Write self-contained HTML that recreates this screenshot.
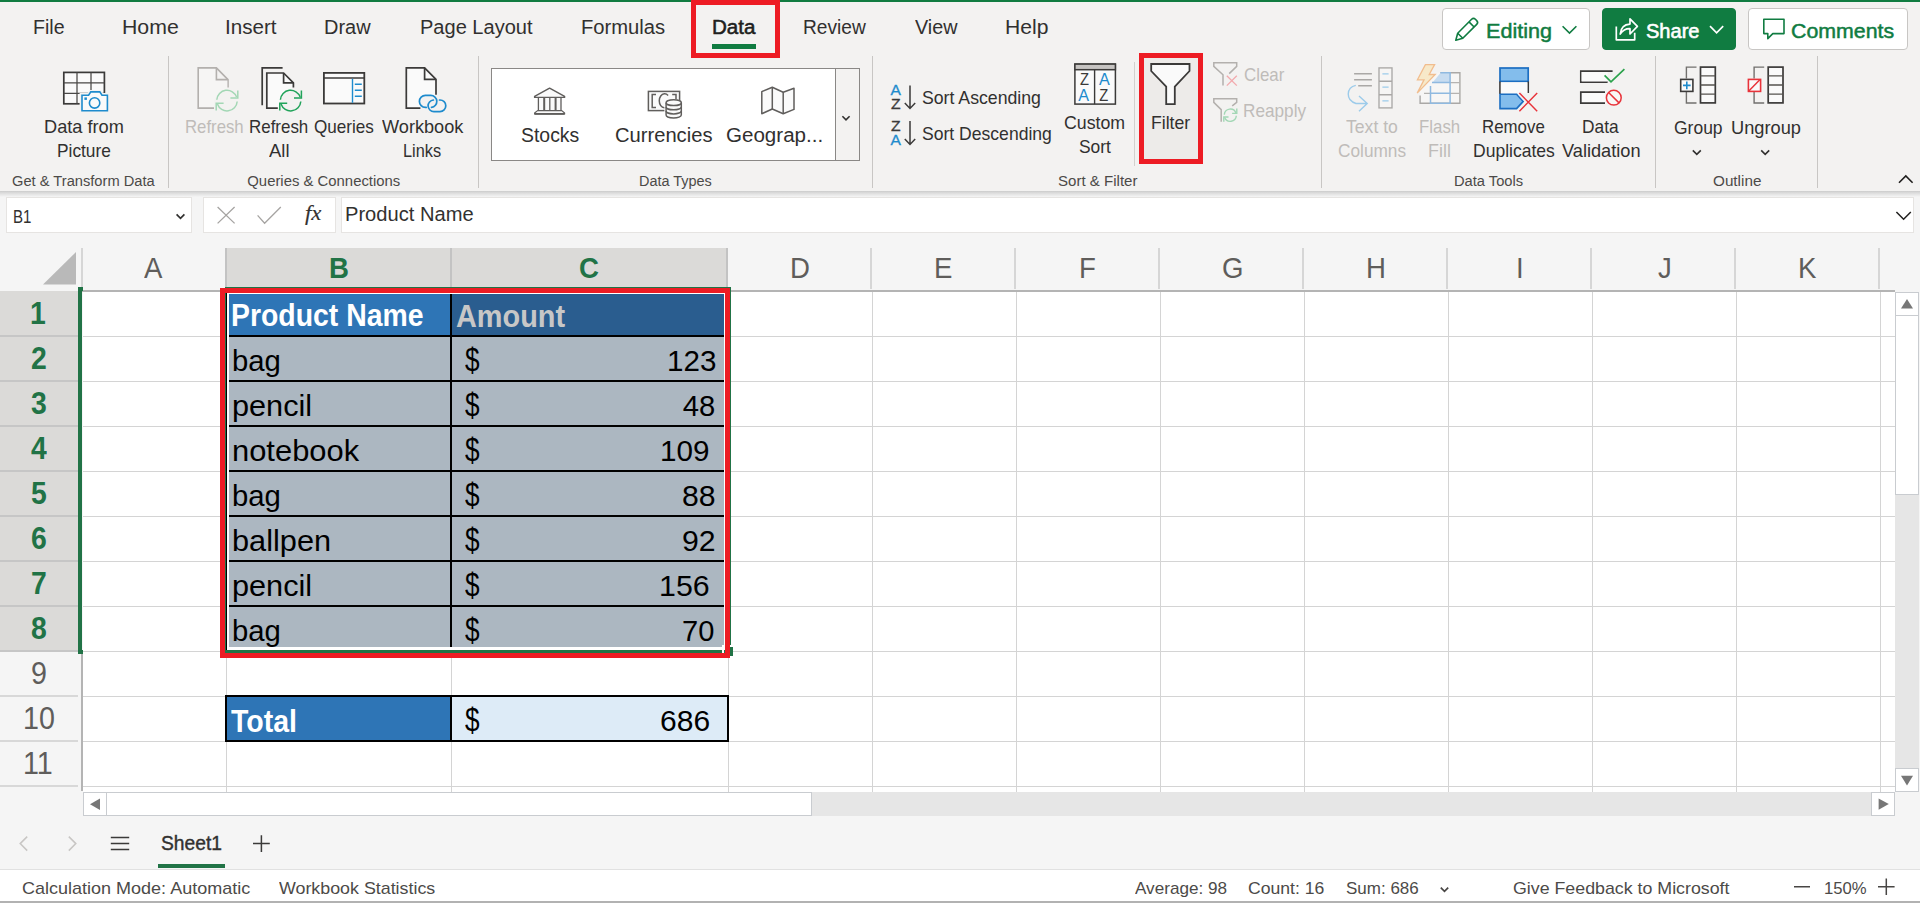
<!DOCTYPE html>
<html lang="en"><head><meta charset="utf-8"><title>Book - Excel</title>
<style>
html,body{margin:0;padding:0;background:#f5f5f5}
#app{position:relative;width:1920px;height:903px;overflow:hidden;background:#f5f5f5;font-family:"Liberation Sans",sans-serif}
#app div,#app i,#app svg.icons{position:absolute;display:block;box-sizing:border-box}
.t{position:absolute;white-space:nowrap;line-height:1;transform-origin:0 0;color:#252423}
.sf{font-family:"Liberation Serif",serif}
.ribbon{left:0;top:0;width:1920px;height:191px;background:#f3f2f1}
.rshadow{left:0;top:191px;width:1920px;height:6px;background:linear-gradient(#cbcbcb,#d7d7d7 22%,#e3e3e3 50%,#eeeeee 80%,#f5f5f5)}
.topline{left:0;top:0;width:1920px;height:2px;background:#107c41}
.sep{width:1px;top:56px;height:132px;background:#c8c6c4}
.sep.s{top:62px;height:104px;background:#d2d0ce}
.tabsel{left:712px;top:44px;width:44px;height:5px;background:#107c41}
.redbox{border:5px solid #ed1c24}
.btn{top:8px;height:42px;border-radius:4px;background:#fff;border:1px solid #c8c6c4}
.btn.share{background:#107c41;border-color:#107c41}
.gallery{left:491px;top:68px;width:369px;height:93px;background:#fff;border:1px solid #8a8886}
.gallery .more{left:343px;top:0;width:24px;height:91px;background:#f3f2f1;border-left:1px solid #8a8886}
.filterbg{left:1144px;top:58px;width:54px;height:101px;background:#edebe9}
.fbox{top:197px;height:36px;background:#fff;border:1px solid #e6e4e2}
.colsel{left:226px;top:248px;width:501px;height:42px;background:#dbdad8}
.hd{top:248px;width:2px;height:41px;background:#d6d6d6}
.hd.sel{background:#c3c3c3}
.hline{left:78px;top:290px;width:1817px;height:2px;background:#b4b4b4}
.rowsel{left:0;top:291px;width:78px;height:361px;background:#dbdad8}
.rd{left:0;width:78px;height:2px;background:#c6c6c6}
.rd.u{background:#d8d8d8}
.rowgreen{left:78px;top:287px;width:4px;height:367px;background:#217346}
.rgfoot{left:82px;width:1px;height:4px;background:#217346}
.rowedge{left:81px;top:654px;width:2px;height:137px;background:#b4b4b4}
.sheet{left:83px;top:292px;width:1812px;height:500px;background:#fff;overflow:hidden}
.gv{top:0;width:1px;height:500px;background:#d4d4d4;margin-left:-83px}
.gh{left:0;width:1812px;height:1px;background:#d4d4d4;margin-top:-292px}
.cell{background:#acb7c1}
.blk{background:#000}
.vsb{left:1895px;top:292px;width:24px;height:500px;background:#e6e6e6}
.sbtn{background:#fff;border:1px solid #c9ccd0}
.hsb{left:83px;top:792px;width:1812px;height:24px;background:#e6e6e6}
.tabline{left:158px;top:864px;width:67px;height:4px;background:#217346}
.status{left:0;top:869px;width:1920px;height:32px;background:#fff;border-top:1px solid #e1e1e1}
.bottomline{left:0;top:901px;width:1920px;height:2px;background:#b2b2b2}
svg.icons{left:0;top:0;pointer-events:none}

</style></head>
<body>
<div id="app">
<div class="ribbon"></div>
<div class="rshadow"></div>
<div class="topline"></div>
<div class="tabsel"></div>
<div class="redbox" style="left:691px;top:0;width:89px;height:58px"></div>
<div class="btn edit" style="left:1442px;width:148px"></div>
<div class="btn share" style="left:1602px;width:134px"></div>
<div class="btn cmt" style="left:1748px;width:160px"></div>
<div class="sep" style="left:168px"></div>
<div class="sep" style="left:478px"></div>
<div class="sep" style="left:872px"></div>
<div class="sep s" style="left:1134px"></div>
<div class="sep" style="left:1321px"></div>
<div class="sep" style="left:1655px"></div>
<div class="sep" style="left:1817px"></div>
<div class="gallery"><div class="more"></div></div>
<div class="filterbg"></div>
<div class="redbox" style="left:1139px;top:53px;width:64px;height:111px"></div>

<div class="fbox" style="left:6px;width:186px"></div>
<div class="fbox" style="left:203px;width:133px"></div>
<div class="fbox" style="left:341px;width:1573px"></div>

<div class="colsel"></div>
<i class="hd" style="left:81px"></i><i class="hd sel" style="left:225px"></i><i class="hd sel" style="left:450px"></i><i class="hd sel" style="left:726px"></i><i class="hd" style="left:870px"></i><i class="hd" style="left:1014px"></i><i class="hd" style="left:1158px"></i><i class="hd" style="left:1302px"></i><i class="hd" style="left:1446px"></i><i class="hd" style="left:1590px"></i><i class="hd" style="left:1734px"></i><i class="hd" style="left:1878px"></i>
<div class="rowsel"></div>
<i class="rd" style="top:335px"></i><i class="rd" style="top:380px"></i><i class="rd" style="top:425px"></i><i class="rd" style="top:470px"></i><i class="rd" style="top:515px"></i><i class="rd" style="top:560px"></i><i class="rd" style="top:605px"></i><i class="rd" style="top:650px"></i><i class="rd u" style="top:695px"></i><i class="rd u" style="top:740px"></i><i class="rd u" style="top:785px"></i>
<div class="hline"></div>
<div class="rowedge"></div>
<div class="sheet">
<i class="gv" style="left:226px"></i><i class="gv" style="left:451px"></i><i class="gv" style="left:728px"></i><i class="gv" style="left:872px"></i><i class="gv" style="left:1016px"></i><i class="gv" style="left:1160px"></i><i class="gv" style="left:1304px"></i><i class="gv" style="left:1448px"></i><i class="gv" style="left:1592px"></i><i class="gv" style="left:1736px"></i><i class="gv" style="left:1880px"></i><i class="gh" style="top:336px"></i><i class="gh" style="top:381px"></i><i class="gh" style="top:426px"></i><i class="gh" style="top:471px"></i><i class="gh" style="top:516px"></i><i class="gh" style="top:561px"></i><i class="gh" style="top:606px"></i><i class="gh" style="top:651px"></i><i class="gh" style="top:696px"></i><i class="gh" style="top:741px"></i><i class="gh" style="top:786px"></i>
</div>
<div class="rowgreen"></div>
<div class="rgfoot" style="top:287px"></div>
<div class="rgfoot" style="top:650px"></div>

<!-- table cells -->
<div class="cell" style="left:229px;top:294px;width:495px;height:353px"></div>
<div class="cell" style="left:229px;top:294px;width:222px;height:42px;background:#2e75b6"></div>
<div class="cell" style="left:452px;top:294px;width:272px;height:42px;background:#2a5d8f"></div>
<div class="blk" style="left:450px;top:294px;width:2px;height:353px"></div>
<div class="blk" style="left:229px;top:335px;width:495px;height:2px"></div>
<div class="blk" style="left:229px;top:380px;width:495px;height:2px"></div>
<div class="blk" style="left:229px;top:425px;width:495px;height:2px"></div>
<div class="blk" style="left:229px;top:470px;width:495px;height:2px"></div>
<div class="blk" style="left:229px;top:515px;width:495px;height:2px"></div>
<div class="blk" style="left:229px;top:560px;width:495px;height:2px"></div>
<div class="blk" style="left:229px;top:605px;width:495px;height:2px"></div>
<!-- selection borders -->
<div style="left:225px;top:287px;width:506px;height:366px;border:2px solid #217346;border-bottom-width:3px;border-right-width:1px"></div>
<div style="left:226px;top:292px;width:1px;height:358px;background:#000"></div>
<div style="left:227px;top:292px;width:2px;height:358px;background:#fff"></div>
<div style="left:227px;top:292px;width:498px;height:2px;background:#fff"></div>
<div style="left:724px;top:292px;width:2px;height:358px;background:#fff"></div>
<div style="left:227px;top:647px;width:498px;height:3px;background:#fff"></div>
<div class="redbox" style="left:220px;top:288px;width:510px;height:370px"></div>
<div style="left:730px;top:645px;width:1px;height:2px;background:#fff"></div>
<div style="left:722px;top:645px;width:2px;height:8px;background:#fff"></div>
<div style="left:730px;top:647px;width:3px;height:9px;background:#217346"></div>

<!-- total row -->
<div class="blk" style="left:225px;top:695px;width:504px;height:47px"></div>
<div style="left:227px;top:697px;width:223px;height:43px;background:#2e75b6"></div>
<div style="left:452px;top:697px;width:275px;height:43px;background:#ddebf7"></div>

<!-- scrollbars -->
<div class="vsb">
  <div class="sbtn" style="left:0;top:0;width:24px;height:24px"></div>
  <div class="sbtn" style="left:0;top:23px;width:24px;height:180px"></div>
  <div class="sbtn" style="left:0;top:476px;width:24px;height:24px"></div>
</div>
<div class="hsb">
  <div class="sbtn" style="left:0;top:0;width:24px;height:24px"></div>
  <div class="sbtn" style="left:23px;top:0;width:706px;height:24px"></div>
  <div class="sbtn" style="left:1788px;top:0;width:24px;height:24px"></div>
</div>
<div class="tabline"></div>
<div class="status"></div>
<div class="bottomline"></div>

<svg class="icons" width="1920" height="903" viewBox="0 0 1920 903" fill="none">
<g class="ic-datapic">
<rect x="63.8" y="72.4" width="40.6" height="31.4" fill="#fafafa" stroke="#3b3a39" stroke-width="1.7"/>
<path d="M77 72.4v31.4M91 72.4v31.4M63.8 82.9h40.6M63.8 93.3h40.6" stroke="#4a4847" stroke-width="1.25"/>
<path d="M79.6 113V93h8l2-3h11.4l2 3h6.6v20z" fill="#f3f2f1"/>
<path d="M82 95.3h6.6l2.2-3.4h9l2.2 3.4h5.4v15.5H82z" fill="#fafafa" stroke="#1e8bcd" stroke-width="1.6"/>
<circle cx="94.6" cy="102.9" r="5.2" stroke="#1e8bcd" stroke-width="1.6"/>
<rect x="84.4" y="97.4" width="2.5" height="2.5" fill="#1e8bcd"/>
</g>
<g class="ic-refresh">
<path d="M228 87.5V79.6L216.4 67.9H198.2V108.1H214" fill="none" stroke="#b3b0ad" stroke-width="1.6"/>
<path d="M199 69h17.4v11H227.3v8l-8 4-5 8v7H199z" fill="#f6f5f4"/>
<path d="M216.4 67.9V79.6H228" fill="none" stroke="#b3b0ad" stroke-width="1.6"/>
<g stroke="#a3d7b5" stroke-width="1.5" fill="none">
<path d="M216.8 99.69999999999999A10.2 10.2 0 0 1 236.6 97.1"/>
<path d="M230.4 97.89999999999999H237.8V90.6"/>
<path d="M237.2 101.5A10.2 10.2 0 0 1 217.4 104.1"/>
<path d="M223.6 103.3H216.2V110.6"/>
</g>
</g>
<g class="ic-refreshall">
<path d="M282.6 67.9H262.2V105.2" stroke="#3b3a39" stroke-width="1.7"/>
<path d="M267 73.3h16.6l9.6 9.7v5l-7 3-6 9v7.7H267z" fill="#fafafa"/>
<path d="M293.4 87.5V82.9L283.6 73H266.8V108.1H277.8" stroke="#3b3a39" stroke-width="1.7"/>
<path d="M283.6 73V82.9H293.4" stroke="#3b3a39" stroke-width="1.7"/>
<g stroke="#21a35a" stroke-width="1.5" fill="none">
<path d="M280.40000000000003 99.69999999999999A10.2 10.2 0 0 1 300.20000000000005 97.1"/>
<path d="M294.0 97.89999999999999H301.40000000000003V90.6"/>
<path d="M300.8 101.5A10.2 10.2 0 0 1 281.0 104.1"/>
<path d="M287.20000000000005 103.3H279.8V110.6"/>
</g>
</g>
<g class="ic-queries">
<rect x="323.9" y="72.9" width="40.4" height="30.6" fill="#fafafa" stroke="#3b3a39" stroke-width="1.8"/>
<path d="M323.9 78h40.4" stroke="#3b3a39" stroke-width="1.7"/>
<path d="M352.5 78.8v24" stroke="#1e8bcd" stroke-width="1.4"/>
<path d="M354.8 84.2h7M354.8 90.2h7M354.8 96.2h7" stroke="#1e8bcd" stroke-width="1.6"/>
</g>
<g class="ic-wblinks">
<path d="M406.3 67.8h18.3l11.4 11.6v15.4l-12 1-4 6v6.4H406.3z" fill="#fafafa"/>
<path d="M436 94.8V79.4L424.6 67.8H406.3V108.2H420.4" stroke="#3b3a39" stroke-width="1.7"/>
<path d="M424.6 67.8V79.4H436" stroke="#3b3a39" stroke-width="1.7"/>
<g stroke="#1e8bcd" stroke-width="1.7" fill="none" stroke-linecap="round">
<path d="M426.2 107.4H425.4A6 6 0 0 1 425.4 95.4H430.8A6 6 0 0 1 431.5 107.36"/>
<path d="M433.4 100.02A5.8 5.8 0 0 0 433.9 111.6H440A5.8 5.8 0 0 0 440 100H439.5"/>
</g></g>
<g class="ic-stocks" stroke="#605e5c" stroke-width="1.4">
<path d="M534.6 96.4L549.6 88.1L564.6 96.4V97.4H534.6z" fill="#fafafa" stroke-linejoin="round"/>
<rect x="538.3" y="98.2" width="22.8" height="11.8" fill="#fafafa" stroke="none"/>
<path d="M538.4 98v12.4M549.8 98v12.4M561 98v12.4" stroke-width="1.3"/>
<path d="M544.2 98v12.4M555.6 98v12.4" stroke-width="2"/>
<path d="M537.6 110.6h24.2L564.6 113v1H534.6v-1z" fill="#fafafa" stroke-width="1.2" stroke-linejoin="round"/>
<path d="M534.6 113.9h30" stroke-width="1.8"/>
</g>
<g class="ic-curr" stroke="#605e5c" stroke-width="1.5">
<rect x="648.4" y="91.4" width="31.2" height="19.2" fill="#fafafa"/>
<path d="M656 94.4h-3.8v13h3.8M672.2 94.4h3.8v5" />
<path d="M668.1 95.4A5.4 7 0 1 0 668.1 106.2"/>
<path d="M664.4 116.5v-14a8.6 3.4 0 0 1 17.6 0v13a8.6 3.4 0 0 1-17.6 0z" fill="#fff" stroke="none"/>
<path d="M666.1 102.7v12.4a7.6 2.9 0 0 0 15.2 0v-12.4" fill="#fafafa"/>
<ellipse cx="673.7" cy="102.7" rx="7.6" ry="2.9" fill="#fafafa"/>
<path d="M666.1 106.9a7.6 2.9 0 0 0 15.2 0M666.1 111a7.6 2.9 0 0 0 15.2 0"/>
</g>
<g class="ic-geo" stroke="#605e5c" stroke-width="1.5" stroke-linejoin="round">
<path d="M761.8 91.6L772.3 87.2L783.2 92.3L794 88.2V109.4L783.2 113.7L772.3 109L761.8 113.7z" fill="#fafafa"/>
<path d="M772.3 87.2V109M783.2 92.3V113.7"/>
</g>
<path d="M842.4 116.2l3.6 3.6l3.6-3.6" stroke="#323130" stroke-width="1.6"/>
<g class="ic-sortasc">
<text x="895.7" y="95.4" font-size="14.3" text-anchor="middle" fill="#1e8bcd" stroke="#1e8bcd" stroke-width=".3" textLength="10.4" lengthAdjust="spacingAndGlyphs">A</text>
<text x="895.7" y="108.7" font-size="14.3" text-anchor="middle" fill="#3b3a39" stroke="#3b3a39" stroke-width=".3" textLength="9.6" lengthAdjust="spacingAndGlyphs">Z</text>
<path d="M910 85.6V108M904.8 103l5.2 5.4l5.2-5.4" stroke="#3b3a39" stroke-width="1.5"/>
</g>
<g class="ic-sortdesc">
<text x="895.7" y="131" font-size="14.3" text-anchor="middle" fill="#3b3a39" stroke="#3b3a39" stroke-width=".3" textLength="9.6" lengthAdjust="spacingAndGlyphs">Z</text>
<text x="895.7" y="144.5" font-size="14.3" text-anchor="middle" fill="#1e8bcd" stroke="#1e8bcd" stroke-width=".3" textLength="10.4" lengthAdjust="spacingAndGlyphs">A</text>
<path d="M910 121V144M904.8 139l5.2 5.4l5.2-5.4" stroke="#3b3a39" stroke-width="1.5"/>
</g>
<g class="ic-customsort">
<rect x="1074.9" y="64.1" width="40.5" height="40" fill="#fafafa" stroke="#3b3a39" stroke-width="1.5"/>
<rect x="1074.9" y="64.1" width="40.5" height="5.6" fill="#c6c4c2" stroke="#3b3a39" stroke-width="1.5"/>
<path d="M1094.6 69.7V104.1" stroke="#3b3a39" stroke-width="1.4"/>
<text x="1084.4" y="85.3" font-size="17.2" text-anchor="middle" fill="#3b3a39" textLength="9" lengthAdjust="spacingAndGlyphs">Z</text>
<text x="1083.6" y="100.6" font-size="17.2" text-anchor="middle" fill="#1e8bcd" textLength="10.8" lengthAdjust="spacingAndGlyphs">A</text>
<text x="1104.5" y="85.3" font-size="17.2" text-anchor="middle" fill="#1e8bcd" textLength="10.8" lengthAdjust="spacingAndGlyphs">A</text>
<text x="1103.8" y="100.6" font-size="17.2" text-anchor="middle" fill="#3b3a39" textLength="9" lengthAdjust="spacingAndGlyphs">Z</text>
</g>
<g class="ic-filter">
<path d="M1151.2 64H1189.5V71L1174.8 86.6V104.1H1166.2V86.6L1151.2 71z" fill="#fafafa" stroke="#3b3a39" stroke-width="1.8" stroke-linejoin="miter"/>
</g>
<g class="ic-clear">
<path d="M1229.2 73.6L1236.7 66.4V62.8H1213.8V66.4L1223 74.8V85.6" stroke="#b3b0ad" stroke-width="1.5" fill="none"/>
<path d="M1226.8 75.8l10 9.8M1236.8 75.8l-10 9.8" stroke="#f2a9ad" stroke-width="1.3"/></g>
<g class="ic-reapply">
<path d="M1232.2 105.8L1236.7 102.4V98.8H1213.8V102.4L1221.2 109.6V121.8" stroke="#b3b0ad" stroke-width="1.5" fill="none"/>
<g stroke="#a3d7b5" stroke-width="1.4" fill="none">
<path d="M1224.3 114.60000000000001A6 6 0 0 1 1235.8999999999999 113.0"/>
<path d="M1232.1 113.4H1236.8V108.60000000000001"/>
<path d="M1236.3 115.8A6 6 0 0 1 1224.7 117.4"/>
<path d="M1228.5 117.0H1223.8V121.8"/>
</g></g>
<g class="ic-t2c">
<path d="M1354.1 73.8h17.8M1354.1 79.8h17.8M1358.2 85.8h13.7" stroke="#aaa8a6" stroke-width="1.4"/>
<rect x="1379" y="67.9" width="13" height="40" fill="#f6f5f4" stroke="#aaa8a6" stroke-width="1.35"/>
<path d="M1379 81.2h13M1379 94.7h13" stroke="#aaa8a6" stroke-width="1.35"/>
<path d="M1382.4 73.8h6.2M1382.4 87.2h6.2M1382.4 100.9h6.2" stroke="#9ccbea" stroke-width="1.3"/>
<path d="M1355.8 85.4C1346 87.6 1345.4 100.4 1356 103.5H1366.8M1359 96l8.2 7.5l-8.2 7.8" stroke="#9ccbea" stroke-width="1.4"/>
</g>
<g class="ic-flash">
<path d="M1421 72.7H1459.9V103.3H1420.1V72.7z" fill="#f7f6f5"/>
<path d="M1440.4 72.7H1459.9V103.3H1420.1V95.4" fill="none" stroke="#aaa8a6" stroke-width="1.4"/>
<path d="M1450 82.6h9.9M1450 93.3h9.9M1424 93.3h6" stroke="#b5b3b1" stroke-width="1.3"/>
<path d="M1440.6 72.7H1450V82.6H1432.6z" fill="#c7dcf0"/>
<path d="M1440.4 72.7H1450.1V103.3H1430.5V86" fill="none" stroke="#8fb9e0" stroke-width="1.5"/>
<path d="M1432 82.6H1450M1430.5 93.3H1450" stroke="#8fb9e0" stroke-width="1.5"/>
<path d="M1425.4 64.6h9.2l-5.4 9.9h6l-18 18.6l6.8-13.3h-6.6z" fill="#f7e9c9" stroke="#f1bd8e" stroke-width="1.3" stroke-linejoin="miter"/>
</g>
<g class="ic-remdup">
<rect x="1500" y="68" width="28.2" height="13.4" fill="#83bdec" stroke="#1b6ec2" stroke-width="1.7"/>
<path d="M1500 81.4V94M1528.2 81.4V93" stroke="#3b3a39" stroke-width="1.7"/>
<rect x="1500.8" y="82.3" width="26.6" height="11" fill="#fafafa"/>
<path d="M1500 94.2h16.6l6.6 7.2l-6.6 7.2H1500z" fill="#83bdec" stroke="#1b6ec2" stroke-width="1.6"/>
<path d="M1519.4 93l17.8 18.2M1537.2 93l-17.8 18.2" stroke="#f3f2f1" stroke-width="4.4"/>
<path d="M1519.4 93l17.8 18.2M1537.2 93l-17.8 18.2" stroke="#e8333a" stroke-width="1.45"/>
</g>
<g class="ic-dataval">
<path d="M1612.6 71.2H1580.8V82.2H1607.6" fill="none" stroke="#3b3a39" stroke-width="1.7"/>
<path d="M1581.6 72h26v9.4h-26z" fill="#fafafa"/>
<path d="M1604.6 75.4l6.4 6.4l13.4-12.6" stroke="#2ba24c" stroke-width="1.7"/>
<path d="M1605 92.2H1580.8V103.2H1605" fill="#fafafa" stroke="#3b3a39" stroke-width="1.7"/>
<circle cx="1613.8" cy="97.7" r="7.4" fill="#f8f7f6" stroke="#e8333a" stroke-width="1.5"/>
<path d="M1608.6 92.5l10.4 10.4" stroke="#e8333a" stroke-width="1.5"/>
</g>
<g>
<path d="M1696.5 67.1H1686.4V78.5M1686.4 92V103H1696.5" stroke="#72706e" stroke-width="1.4"/>
<rect x="1700.5" y="67.1" width="14.8" height="35.8" fill="#fafafa" stroke="#3b3a39" stroke-width="1.7"/>
<path d="M1700.5 75.9h14.8M1700.5 85h14.8M1700.5 94.1h14.8" stroke="#55534f" stroke-width="1.3"/>
<rect x="1680.7" y="79.4" width="12.2" height="12" fill="#fafafa" stroke="#3b3a39" stroke-width="1.6"/>
<path d="M1686.8 81.6v7.6M1683 85.4h7.6" stroke="#1e8bcd" stroke-width="1.6"/>
</g>
<g>
<path d="M1764.2 67.1H1754.1000000000001V78.5M1754.1000000000001 92V103H1764.2" stroke="#72706e" stroke-width="1.4"/>
<rect x="1768.2" y="67.1" width="14.8" height="35.8" fill="#fafafa" stroke="#3b3a39" stroke-width="1.7"/>
<path d="M1768.2 75.9h14.8M1768.2 85h14.8M1768.2 94.1h14.8" stroke="#55534f" stroke-width="1.3"/>
<rect x="1748.4" y="79.4" width="12.2" height="12" fill="#fafafa" stroke="#e8333a" stroke-width="1.6"/>
<path d="M1748.8 91l11-11.2" stroke="#e8333a" stroke-width="1.5"/>
</g>
<path d="M1692.8 150.4l4 4l4-4M1761.2 150.4l4 4l4-4" stroke="#323130" stroke-width="1.6"/>
<path d="M1899 182.8l6.8-6.8l6.8 6.8" stroke="#201f1e" stroke-width="1.6"/>
<g class="ic-pencil" stroke="#107c41" stroke-width="1.6" stroke-linejoin="round">
<path d="M1455.8 40.2l1.9-7L1471.6 19.3a2.7 2.7 0 0 1 3.8 0l1.3 1.3a2.7 2.7 0 0 1 0 3.8L1462.8 38.3z"/>
<path d="M1469 21.9l5.1 5.1M1457.7 33.2l5.1 5.1"/>
</g>
<path d="M1562.6 26.2l6.9 6.9l6.9-6.9" stroke="#107c41" stroke-width="1.6"/>
<g class="ic-share" stroke="#fff" stroke-width="1.7" stroke-linejoin="round">
<path d="M1616.3 26.4v13.4h18.4v-7"/>
<path d="M1620.2 34c.6-6.4 4.6-9.6 9.8-9.9v-5.3l7.4 7.6l-7.4 7.6v-5.3c-4.2-.2-7.2 1.6-9.8 5.3z"/>
</g>
<path d="M1710 26.2l6.6 6.6l6.6-6.6" stroke="#fff" stroke-width="1.7"/>
<path d="M1763.8 19.2h20.2v14.4h-11.2l-5 5v-5h-4z" stroke="#107c41" stroke-width="1.6" stroke-linejoin="round"/>
<path d="M176.6 214.4l3.9 3.9l3.9-3.9" stroke="#323130" stroke-width="1.7"/>
<path d="M217.6 207l17 16.4M234.6 207l-17 16.4" stroke="#a6a4a2" stroke-width="1.3"/>
<path d="M257.6 215.4l7 7.8l16.2-16.2" stroke="#a6a4a2" stroke-width="1.3"/>
<path d="M1896.4 212l7.2 7.2l7.2-7.2" stroke="#201f1e" stroke-width="1.5"/>
<path d="M76 252v32.6H43z" fill="#b9b9b9"/>
<path d="M1901 308.6h12l-6-9.6z" fill="#777"/>
<path d="M1901 775.8h12l-6 9.6z" fill="#777"/>
<path d="M100 798.4v11.6l-10-5.8z" fill="#777"/>
<path d="M1878.6 798.4v11.4l10.2-5.7z" fill="#777"/>
<path d="M27.2 836.6l-7 7l7 7M68.8 836.6l7 7l-7 7" stroke="#c8c6c4" stroke-width="1.5"/>
<path d="M110.8 837.4h18.4M110.8 843.4h18.4M110.8 849.4h18.4" stroke="#3b3a39" stroke-width="1.5"/>
<path d="M253 843.6h16.8M261.4 835.2v16.8" stroke="#3b3a39" stroke-width="1.5"/>
<path d="M1440.8 887.6l3.7 3.7l3.7-3.7" stroke="#484644" stroke-width="1.7"/>
<path d="M1794 886.8h16M1878 886.8h16.6M1886.3 878.6v16.4" stroke="#484644" stroke-width="1.5"/>
</svg>
<div class="texts">
<span class="t" style="left:33.27px;top:15.8px;font-size:21.05px;transform:scaleX(0.9314);color:#31302f;">File</span>
<span class="t" style="left:121.99px;top:15.8px;font-size:21.05px;transform:scaleX(1.0103);color:#31302f;">Home</span>
<span class="t" style="left:225.32px;top:15.8px;font-size:21.05px;transform:scaleX(0.9789);color:#31302f;">Insert</span>
<span class="t" style="left:324.35px;top:15.8px;font-size:21.05px;transform:scaleX(0.9486);color:#31302f;">Draw</span>
<span class="t" style="left:419.85px;top:15.8px;font-size:21.05px;transform:scaleX(0.9519);color:#31302f;">Page Layout</span>
<span class="t" style="left:581.04px;top:15.8px;font-size:21.05px;transform:scaleX(0.9595);color:#31302f;">Formulas</span>
<span class="t" style="left:802.79px;top:15.8px;font-size:21.05px;transform:scaleX(0.9098);color:#31302f;">Review</span>
<span class="t" style="left:914.7px;top:15.8px;font-size:21.05px;transform:scaleX(0.9405);color:#31302f;">View</span>
<span class="t" style="left:1005.3px;top:15.8px;font-size:21.05px;transform:scaleX(1.0029);color:#31302f;">Help</span>
<span class="t" style="left:711.52px;top:15.8px;font-size:21.05px;transform:scaleX(0.9782);color:#201f1e;-webkit-text-stroke:0.55px currentColor;">Data</span>
<span class="t" style="left:1485.67px;top:19.8px;font-size:21.05px;transform:scaleX(1.0264);color:#107c41;-webkit-text-stroke:0.5px currentColor;">Editing</span>
<span class="t" style="left:1645.7px;top:19.8px;font-size:21.05px;transform:scaleX(0.9521);color:#ffffff;-webkit-text-stroke:0.6px currentColor;">Share</span>
<span class="t" style="left:1791.39px;top:19.8px;font-size:21.05px;transform:scaleX(1.0137);color:#107c41;-webkit-text-stroke:0.5px currentColor;">Comments</span>
<span class="t" style="left:43.98px;top:118.8px;font-size:17.75px;transform:scaleX(1.0244);color:#31302f;">Data from</span>
<span class="t" style="left:57.03px;top:142.8px;font-size:17.75px;transform:scaleX(0.9748);color:#31302f;">Picture</span>
<span class="t" style="left:184.66px;top:118.8px;font-size:17.75px;transform:scaleX(0.9439);color:#bfbcb9;">Refresh</span>
<span class="t" style="left:249.05px;top:118.8px;font-size:17.75px;transform:scaleX(0.9539);color:#31302f;">Refresh</span>
<span class="t" style="left:268.5px;top:142.8px;font-size:17.75px;transform:scaleX(1.0382);color:#31302f;">All</span>
<span class="t" style="left:314.0px;top:118.8px;font-size:17.75px;transform:scaleX(0.9635);color:#31302f;">Queries</span>
<span class="t" style="left:381.5px;top:118.8px;font-size:17.75px;transform:scaleX(1.0225);color:#31302f;">Workbook</span>
<span class="t" style="left:402.83px;top:142.8px;font-size:17.75px;transform:scaleX(0.9183);color:#31302f;">Links</span>
<span class="t" style="left:922.0px;top:90px;font-size:17.75px;transform:scaleX(0.9958);color:#31302f;">Sort Ascending</span>
<span class="t" style="left:922.0px;top:125.8px;font-size:17.75px;transform:scaleX(0.9896);color:#31302f;">Sort Descending</span>
<span class="t" style="left:1064.0px;top:114.5px;font-size:17.75px;color:#31302f;">Custom</span>
<span class="t" style="left:1078.6px;top:138.9px;font-size:17.75px;transform:scaleX(0.9809);color:#31302f;">Sort</span>
<span class="t" style="left:1151.31px;top:114.6px;font-size:17.75px;transform:scaleX(0.994);color:#31302f;">Filter</span>
<span class="t" style="left:1243.6px;top:66.5px;font-size:17.75px;transform:scaleX(0.9505);color:#bfbcb9;">Clear</span>
<span class="t" style="left:1242.63px;top:102.9px;font-size:17.75px;transform:scaleX(0.9681);color:#bfbcb9;">Reapply</span>
<span class="t" style="left:1346.0px;top:118.8px;font-size:17.75px;transform:scaleX(0.9921);color:#bfbcb9;">Text to</span>
<span class="t" style="left:1337.8px;top:142.8px;font-size:17.75px;transform:scaleX(0.972);color:#bfbcb9;">Columns</span>
<span class="t" style="left:1419.05px;top:118.8px;font-size:17.75px;transform:scaleX(0.9487);color:#bfbcb9;">Flash</span>
<span class="t" style="left:1428.39px;top:142.8px;font-size:17.75px;transform:scaleX(1.0082);color:#bfbcb9;">Fill</span>
<span class="t" style="left:1482.05px;top:118.8px;font-size:17.75px;transform:scaleX(0.9506);color:#31302f;">Remove</span>
<span class="t" style="left:1472.76px;top:142.8px;font-size:17.75px;transform:scaleX(0.9872);color:#31302f;">Duplicates</span>
<span class="t" style="left:1582.02px;top:118.8px;font-size:17.75px;transform:scaleX(0.9762);color:#31302f;">Data</span>
<span class="t" style="left:1561.7px;top:142.8px;font-size:17.75px;transform:scaleX(1.0255);color:#31302f;">Validation</span>
<span class="t" style="left:1673.8px;top:119.7px;font-size:17.75px;transform:scaleX(0.9846);color:#31302f;">Group</span>
<span class="t" style="left:1730.97px;top:119.7px;font-size:17.75px;transform:scaleX(1.0265);color:#31302f;">Ungroup</span>
<span class="t" style="left:521.0px;top:123.7px;font-size:21.05px;transform:scaleX(0.922);color:#31302f;">Stocks</span>
<span class="t" style="left:615.04px;top:123.7px;font-size:21.05px;transform:scaleX(0.9577);color:#31302f;">Currencies</span>
<span class="t" style="left:726.02px;top:123.7px;font-size:21.05px;transform:scaleX(0.9772);color:#31302f;">Geograp...</span>
<span class="t" style="left:12.3px;top:173.5px;font-size:14.89px;transform:scaleX(0.9865);color:#4c4a48;">Get &amp; Transform Data</span>
<span class="t" style="left:247.3px;top:173.5px;font-size:14.89px;color:#4c4a48;">Queries &amp; Connections</span>
<span class="t" style="left:639.03px;top:173.5px;font-size:14.89px;transform:scaleX(0.9715);color:#4c4a48;">Data Types</span>
<span class="t" style="left:1057.5px;top:173.5px;font-size:14.89px;transform:scaleX(1.0119);color:#4c4a48;">Sort &amp; Filter</span>
<span class="t" style="left:1454.01px;top:173.5px;font-size:14.89px;transform:scaleX(0.9878);color:#4c4a48;">Data Tools</span>
<span class="t" style="left:1712.5px;top:173.5px;font-size:14.89px;transform:scaleX(1.0265);color:#4c4a48;">Outline</span>
<span class="t" style="left:12.67px;top:207.75px;font-size:18.18px;transform:scaleX(0.8286);color:#323130;">B1</span>
<span class="t" style="left:344.97px;top:204.7px;font-size:19.47px;transform:scaleX(1.0341);color:#323130;">Product Name</span>
<span class="t sf" style="left:304.9px;top:203.2px;font-size:20.75px;font-style:italic;transform:scaleX(1.0974);color:#323130;-webkit-text-stroke:0.15px currentColor;">fx</span>
<span class="t" style="left:144.1px;top:253.5px;font-size:29.06px;transform:scaleX(0.95);color:#5f5d5b;">A</span>
<span class="t" style="left:328.53px;top:253.5px;font-size:29.06px;font-weight:700;transform:scaleX(0.95);color:#217346;">B</span>
<span class="t" style="left:579.05px;top:253.5px;font-size:29.06px;font-weight:700;transform:scaleX(0.95);color:#217346;">C</span>
<span class="t" style="left:789.55px;top:253.5px;font-size:29.06px;transform:scaleX(0.95);color:#5f5d5b;">D</span>
<span class="t" style="left:934.02px;top:253.5px;font-size:29.06px;transform:scaleX(0.95);color:#5f5d5b;">E</span>
<span class="t" style="left:1078.97px;top:253.5px;font-size:29.06px;transform:scaleX(0.95);color:#5f5d5b;">F</span>
<span class="t" style="left:1221.55px;top:253.5px;font-size:29.06px;transform:scaleX(0.95);color:#5f5d5b;">G</span>
<span class="t" style="left:1366.02px;top:253.5px;font-size:29.06px;transform:scaleX(0.95);color:#5f5d5b;">H</span>
<span class="t" style="left:1516.2px;top:253.5px;font-size:29.06px;transform:scaleX(0.95);color:#5f5d5b;">I</span>
<span class="t" style="left:1657.83px;top:253.5px;font-size:29.06px;transform:scaleX(0.95);color:#5f5d5b;">J</span>
<span class="t" style="left:1797.55px;top:253.5px;font-size:29.06px;transform:scaleX(0.95);color:#5f5d5b;">K</span>
<span class="t" style="left:30.43px;top:297.9px;font-size:30.49px;font-weight:700;transform:scaleX(0.93);color:#217346;">1</span>
<span class="t" style="left:30.89px;top:342.9px;font-size:30.49px;font-weight:700;transform:scaleX(0.93);color:#217346;">2</span>
<span class="t" style="left:31.36px;top:387.9px;font-size:30.49px;font-weight:700;transform:scaleX(0.93);color:#217346;">3</span>
<span class="t" style="left:30.89px;top:432.9px;font-size:30.49px;font-weight:700;transform:scaleX(0.93);color:#217346;">4</span>
<span class="t" style="left:30.89px;top:477.9px;font-size:30.49px;font-weight:700;transform:scaleX(0.93);color:#217346;">5</span>
<span class="t" style="left:30.89px;top:522.9px;font-size:30.49px;font-weight:700;transform:scaleX(0.93);color:#217346;">6</span>
<span class="t" style="left:30.89px;top:567.9px;font-size:30.49px;font-weight:700;transform:scaleX(0.93);color:#217346;">7</span>
<span class="t" style="left:30.89px;top:612.9px;font-size:30.49px;font-weight:700;transform:scaleX(0.93);color:#217346;">8</span>
<span class="t" style="left:31.01px;top:657.9px;font-size:30.49px;transform:scaleX(0.94);color:#5f5d5b;">9</span>
<span class="t" style="left:23.07px;top:702.9px;font-size:30.49px;transform:scaleX(0.94);color:#5f5d5b;">10</span>
<span class="t" style="left:23.24px;top:747.9px;font-size:30.49px;transform:scaleX(0.94);color:#5f5d5b;">11</span>
<span class="t" style="left:231.37px;top:300.1px;font-size:31.07px;font-weight:700;transform:scaleX(0.9145);color:#ffffff;">Product Name</span>
<span class="t" style="left:456.1px;top:300.6px;font-size:31.07px;font-weight:700;transform:scaleX(0.9293);color:#c7c7c7;">Amount</span>
<span class="t" style="left:231.9px;top:346.6px;font-size:29.21px;transform:scaleX(1.0025);color:#000;">bag</span>
<span class="t" style="left:465.0px;top:344.2px;font-size:32.71px;transform:scaleX(0.8);color:#000;">$</span>
<span class="t" style="left:667.17px;top:346.6px;font-size:29.21px;transform:scaleX(1.0136);color:#000;">123</span>
<span class="t" style="left:231.85px;top:391.6px;font-size:29.21px;transform:scaleX(1.0499);color:#000;">pencil</span>
<span class="t" style="left:465.0px;top:389.2px;font-size:32.71px;transform:scaleX(0.8);color:#000;">$</span>
<span class="t" style="left:682.8px;top:391.6px;font-size:29.21px;color:#000;">48</span>
<span class="t" style="left:231.84px;top:436.6px;font-size:29.21px;transform:scaleX(1.058);color:#000;">notebook</span>
<span class="t" style="left:465.0px;top:434.2px;font-size:32.71px;transform:scaleX(0.8);color:#000;">$</span>
<span class="t" style="left:659.97px;top:436.6px;font-size:29.21px;transform:scaleX(1.0158);color:#000;">109</span>
<span class="t" style="left:231.9px;top:481.6px;font-size:29.21px;transform:scaleX(1.0025);color:#000;">bag</span>
<span class="t" style="left:465.0px;top:479.2px;font-size:32.71px;transform:scaleX(0.8);color:#000;">$</span>
<span class="t" style="left:681.76px;top:481.6px;font-size:29.21px;transform:scaleX(1.035);color:#000;">88</span>
<span class="t" style="left:231.85px;top:526.6px;font-size:29.21px;transform:scaleX(1.0518);color:#000;">ballpen</span>
<span class="t" style="left:465.0px;top:524.2px;font-size:32.71px;transform:scaleX(0.8);color:#000;">$</span>
<span class="t" style="left:681.76px;top:526.6px;font-size:29.21px;transform:scaleX(1.035);color:#000;">92</span>
<span class="t" style="left:231.85px;top:571.6px;font-size:29.21px;transform:scaleX(1.0499);color:#000;">pencil</span>
<span class="t" style="left:465.0px;top:569.2px;font-size:32.71px;transform:scaleX(0.8);color:#000;">$</span>
<span class="t" style="left:659.02px;top:571.6px;font-size:29.21px;transform:scaleX(1.04);color:#000;">156</span>
<span class="t" style="left:231.9px;top:616.6px;font-size:29.21px;transform:scaleX(1.0025);color:#000;">bag</span>
<span class="t" style="left:465.0px;top:614.2px;font-size:32.71px;transform:scaleX(0.8);color:#000;">$</span>
<span class="t" style="left:682.2px;top:616.6px;font-size:29.21px;transform:scaleX(0.9955);color:#000;">70</span>
<span class="t" style="left:231.0px;top:705.5px;font-size:31.07px;font-weight:700;transform:scaleX(0.9166);color:#fff;">Total</span>
<span class="t" style="left:465.0px;top:704.2px;font-size:32.71px;transform:scaleX(0.8);color:#000;">$</span>
<span class="t" style="left:659.57px;top:706.6px;font-size:29.21px;transform:scaleX(1.0283);color:#000;">686</span>
<span class="t" style="left:160.8px;top:833.7px;font-size:19.9px;transform:scaleX(0.967);color:#323130;-webkit-text-stroke:0.4px currentColor;">Sheet1</span>
<span class="t" style="left:21.7px;top:879.6px;font-size:17.18px;transform:scaleX(1.0485);color:#4c4a48;">Calculation Mode: Automatic</span>
<span class="t" style="left:278.7px;top:879.6px;font-size:17.18px;transform:scaleX(1.0382);color:#4c4a48;">Workbook Statistics</span>
<span class="t" style="left:1135.0px;top:879.6px;font-size:17.18px;transform:scaleX(0.9974);color:#4c4a48;">Average: 98</span>
<span class="t" style="left:1248.3px;top:879.6px;font-size:17.18px;transform:scaleX(1.0242);color:#4c4a48;">Count: 16</span>
<span class="t" style="left:1345.8px;top:879.6px;font-size:17.18px;transform:scaleX(0.9897);color:#4c4a48;">Sum: 686</span>
<span class="t" style="left:1513.0px;top:879.6px;font-size:17.18px;transform:scaleX(1.0357);color:#4c4a48;">Give Feedback to Microsoft</span>
<span class="t" style="left:1824.33px;top:879.6px;font-size:17.18px;transform:scaleX(0.9707);color:#4c4a48;">150%</span>
</div>
</div>
</body></html>
